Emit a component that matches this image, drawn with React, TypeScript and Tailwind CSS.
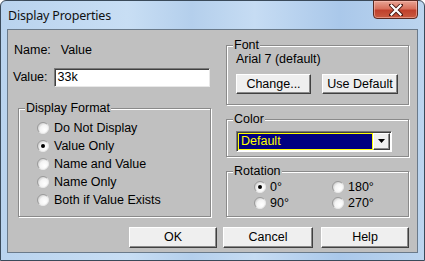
import React from "react";

const font = { fontFamily: '"Liberation Sans", Arial, sans-serif' };

function Radio({ checked, label, gap = 5 }: { checked?: boolean; label: string; gap?: number }) {
  return (
    <div className="flex items-center h-[18px]">
      <svg width="12" height="12" viewBox="0 0 12 12" className="shrink-0">
        <defs>
          <radialGradient id="rg" cx="0.65" cy="0.65" r="0.7">
            <stop offset="0" stopColor="#ffffff" />
            <stop offset="0.6" stopColor="#f4f4f4" />
            <stop offset="1" stopColor="#c8c8c8" />
          </radialGradient>
        </defs>
        <circle cx="6" cy="6" r="5.5" fill="url(#rg)" />
        <path d="M2.1 9.9 A5.5 5.5 0 0 1 9.9 2.1" fill="none" stroke="#9a9a9a" strokeWidth="1" />
        <path d="M2.1 9.9 A5.5 5.5 0 0 0 9.9 2.1" fill="none" stroke="#e8e8e8" strokeWidth="1" />
        {checked && <circle cx="6" cy="6" r="2" fill="#000" />}
      </svg>
      <span className="text-[12.5px] text-black leading-none" style={{ marginLeft: gap }}>{label}</span>
    </div>
  );
}

function Group({ title, className, children }: { title: string; className?: string; children?: React.ReactNode }) {
  return (
    <div className={"relative border border-[#8a8a8a] shadow-[inset_1px_1px_0_#ffffff,1px_1px_0_#ffffff] " + (className ?? "")}>
      <span className="absolute left-[6px] top-[-8px] bg-[#c0c0c0] px-[1px] text-[12.5px] leading-[14px] text-black">{title}</span>
      {children}
    </div>
  );
}

function Button({ label, className }: { label: string; className?: string }) {
  return (
    <div
      className={
        "flex items-center justify-center bg-[#efefef] border-t border-l border-[#ffffff] border-r border-b border-r-[#404040] border-b-[#404040] shadow-[inset_-1px_-1px_0_#8a8a8a] text-[12.5px] text-black " +
        (className ?? "")
      }
    >
      {label}
    </div>
  );
}

export default function App() {
  return (
    <div className="w-[425px] h-[261px] overflow-hidden bg-white" style={font}>
      <div className="w-[425px] h-[261px] flex flex-col rounded-t-[6px] border border-[#3a4a5a] bg-[linear-gradient(90deg,#b9d3ee_0%,#c8def4_30%,#b4cfec_45%,#c6dcf3_60%,#aac8ea_80%,#bcd5ef_100%)]">
        <div className="h-[28px] flex items-start justify-between pl-[7px] pr-[6px] shrink-0">
          <span className="mt-[6px] text-[12.5px] text-[#111]" style={{ fontFamily: '"Noto Sans", "Open Sans", sans-serif', letterSpacing: "-0.2px" }}>
            Display Properties
          </span>
          <div className="w-[45px] h-[19px] -mt-px rounded-b-[4px] border border-[#5a2a22] bg-[linear-gradient(180deg,#e8a494_0%,#d8705c_45%,#c0402c_55%,#c85a40_100%)] flex items-center justify-center shadow-[inset_0_0_0_1px_rgba(255,200,190,0.5)]">
            <svg width="14" height="12" viewBox="0 0 14 12">
              <path d="M2 1 L12 11 M12 1 L2 11" stroke="#4a1a14" strokeWidth="4" strokeLinecap="square" />
              <path d="M2.5 1.5 L11.5 10.5 M11.5 1.5 L2.5 10.5" stroke="#ffffff" strokeWidth="2.2" strokeLinecap="square" />
            </svg>
          </div>
        </div>
        <div className="mx-[6px] h-[224px] shrink-0 border border-[#6a7a8a] bg-[#c0c0c0] flex flex-col text-[12.5px] text-black">
          <div className="flex h-[187px]">
            {/* left column */}
            <div className="w-[204px] pl-[5px] flex flex-col">
              <div className="mt-[13px] h-[14px] flex items-center pl-[1px]">
                <span>Name:</span>
                <span className="ml-[10px]">Value</span>
              </div>
              <div className="mt-[11px] h-[19px] flex items-center">
                <span>Value:</span>
                <div className="ml-[6px] w-[156px] h-[19px] bg-white border-t border-l border-[#7a7a7a] border-r border-b border-r-[#e8e8e8] border-b-[#e8e8e8] shadow-[inset_1px_1px_0_#404040] flex items-center pl-[3px]">
                  33k
                </div>
              </div>
              <Group title="Display Format" className="mt-[21px] ml-[5px] w-[193px] h-[110px]">
                <div className="pt-[10px] pl-[18px] flex flex-col">
                  <Radio label="Do Not Display" />
                  <Radio label="Value Only" checked />
                  <Radio label="Name and Value" />
                  <Radio label="Name Only" />
                  <Radio label="Both if Value Exists" />
                </div>
              </Group>
            </div>
            {/* right column */}
            <div className="ml-[14px] w-[183px] flex flex-col">
              <Group title="Font" className="mt-[15px] h-[60px]">
                <div className="pl-[9px] pt-[6px] leading-[14px]">Arial 7 (default)</div>
                <div className="flex pl-[9px] mt-[8px] gap-[11px]">
                  <Button label="Change..." className="w-[75px] h-[20px]" />
                  <Button label="Use Default" className="w-[76px] h-[20px]" />
                </div>
              </Group>
              <Group title="Color" className="mt-[14px] h-[39px]">
                <div className="ml-[9px] mt-[11px] w-[156px] h-[21px] border-t border-l border-[#7a7a7a] border-r border-b border-r-[#ffffff] border-b-[#ffffff] shadow-[inset_1px_1px_0_#404040] bg-white flex p-[1px]">
                  <div className="flex-1 bg-[#000080] border border-[#ffff00] text-[#ffff00] flex items-center pl-[2px] leading-none text-[12.5px]">
                    Default
                  </div>
                  <div className="w-[17px] bg-[#efefef] border-t border-l border-[#ffffff] border-r border-b border-r-[#404040] border-b-[#404040] shadow-[inset_-1px_-1px_0_#8a8a8a] flex items-center justify-center">
                    <svg width="7" height="4" viewBox="0 0 7 4">
                      <path d="M0 0 H7 L3.5 4 Z" fill="#000" />
                    </svg>
                  </div>
                </div>
              </Group>
              <Group title="Rotation" className="mt-[14px] h-[46px]">
                <div className="grid grid-cols-[78px_60px] pl-[27px] pt-[7px]">
                  <div className="h-[16px] flex items-center"><Radio label="0°" checked gap={4} /></div>
                  <div className="h-[16px] flex items-center"><Radio label="180°" gap={4} /></div>
                  <div className="h-[16px] flex items-center"><Radio label="90°" gap={4} /></div>
                  <div className="h-[16px] flex items-center"><Radio label="270°" gap={4} /></div>
                </div>
              </Group>
            </div>
          </div>
          <div className="flex justify-end pr-[8px] mt-[10px] gap-[6px]">
            <Button label="OK" className="w-[88px] h-[21px]" />
            <Button label="Cancel" className="w-[90px] h-[21px] mr-[2px]" />
            <Button label="Help" className="w-[88px] h-[21px]" />
          </div>
        </div>
      </div>
    </div>
  );
}
